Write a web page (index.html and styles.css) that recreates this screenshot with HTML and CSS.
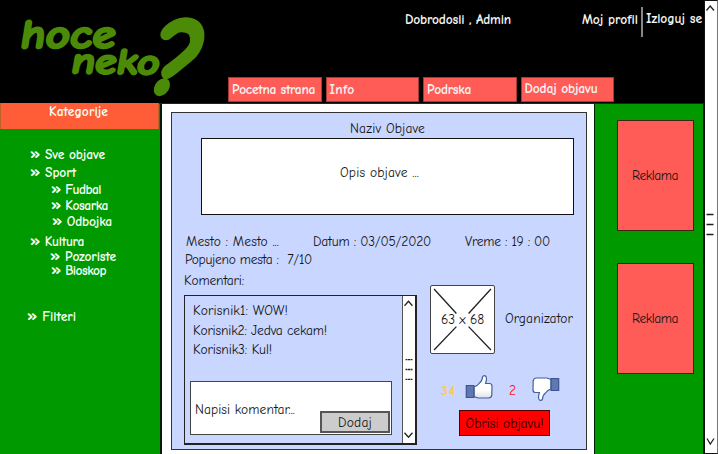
FILE: index.html
```html
<!DOCTYPE html>
<html lang="sr">
<head>
<meta charset="utf-8">
<title>Hoce neko?</title>
<link rel="stylesheet" href="styles.css">
</head>
<body>
<div class="window">
  <div class="page">
    <header class="header">
      <svg class="logo" viewBox="0 0 228 103" aria-label="hoce neko?">
        <g class="logo-text">
          <text transform="translate(19 48) skewX(-9)" font-size="41" stroke-width="2.2" textLength="95" lengthAdjust="spacingAndGlyphs">hoce</text>
          <text transform="translate(70 73) rotate(1) skewX(-9)" font-size="37" stroke-width="2.2" textLength="88" lengthAdjust="spacingAndGlyphs">neko</text>
          <text transform="translate(147 92.500) skewX(-13)" font-size="107" stroke-width="5" textLength="49" lengthAdjust="spacingAndGlyphs">?</text>
        </g>
      </svg>
      <div class="header-main">
        <div class="account">
          <span class="welcome" data-w="106">Dobrodosli , Admin</span>
          <a class="profile" data-w="56">Moj profil</a>
          <a class="logout" data-w="56">Izloguj se</a>
        </div>
        <nav class="tabs">
          <a class="tab"><span data-w="83">Pocetna strana</span></a>
          <a class="tab"><span data-w="25">Info</span></a>
          <a class="tab"><span data-w="44">Podrska</span></a>
          <a class="tab last"><span data-w="73">Dodaj objavu</span></a>
        </nav>
      </div>
    </header>
    <div class="columns">
      <aside class="sidebar">
        <h2 class="side-title"><span data-w="59">Kategorije</span></h2>
        <ul class="menu">
          <li class="all"><span data-w="75"><b>»</b> Sve objave</span></li>
          <li class="sport"><span data-w="46"><b>»</b> Sport</span>
            <ul class="sub">
              <li><span data-w="50"><b>»</b> Fudbal</span></li>
              <li><span data-w="57"><b>»</b> Kosarka</span></li>
              <li class="shifted"><span data-w="60"><b>»</b> Odbojka</span></li>
            </ul>
          </li>
          <li class="culture"><span data-w="54"><b>»</b> Kultura</span>
            <ul class="sub tight">
              <li><span data-w="66"><b>»</b> Pozoriste</span></li>
              <li class="shifted"><span data-w="55"><b>»</b> Bioskop</span></li>
            </ul>
          </li>
          <li class="filters"><span data-w="49"><b>»</b> Filteri</span></li>
        </ul>
      </aside>
      <main class="main">
        <article class="post">
          <h1 class="post-title"><span data-w="75">Naziv Objave</span></h1>
          <div class="description"><span data-w="79">Opis objave ...</span></div>
          <div class="facts">
            <span data-w="93">Mesto : Mesto ...</span>
            <span class="date" data-w="118">Datum : 03/05/2020</span>
            <span class="time" data-w="85">Vreme : 19 : 00</span>
          </div>
          <div class="places"><span data-w="127">Popujeno mesta :&nbsp; 7/10</span></div>
          <div class="lower">
            <section class="comments-col">
              <h3 class="comments-title"><span data-w="60">Komentari:</span></h3>
              <div class="comments">
                <div class="comments-body">
                  <p><span data-w="95">Korisnik1: WOW!</span></p>
                  <p><span data-w="134">Korisnik2: Jedva cekam!</span></p>
                  <p><span data-w="79">Korisnik3: Kul!</span></p>
                  <div class="composer">
                    <span class="hint" data-w="100">Napisi komentar...</span>
                    <button class="add"><span data-w="34">Dodaj</span></button>
                  </div>
                </div>
                <svg class="inner-scroll" viewBox="0 0 12 147">
                  <path d="M1.5 9.5 5.5 5l4 4.500M1.500 137l4 4.500 4-4.500"/>
                  <path class="grip" d="M2.500 63.500h7M2.500 73.500h7M2.500 83.500h7"/>
                </svg>
              </div>
            </section>
            <section class="side-info">
              <div class="organizer">
                <div class="photo">
                  <svg viewBox="0 0 62 66"><path d="M3 3 25 27M37 27 59 3M3 63 25 40M37 40 59 63"/></svg>
                  <span class="photo-size" data-w="43">63 x 68</span>
                </div>
                <span class="organizer-name" data-w="68">Organizator</span>
              </div>
              <div class="votes">
                <span class="up" data-w="15">34</span>
                <svg class="thumb thumb-up" viewBox="0 0 28 26">
                  <defs><linearGradient id="hand" x1="0" y1="0" x2="0" y2="1"><stop offset=".65" stop-color="#fff"/><stop offset="1" stop-color="#dedfe6"/></linearGradient></defs>
                  <path d="M9 13Q12.500 12 14.500 9Q17.300 7 17.500 3Q18 1.400 20 1.600Q21.800 2.500 21.500 5.500L20.600 9.500H25Q27.200 10 27 12.500L26.800 21Q26.500 24 23.500 24H13L9 22.500Z" fill="url(#hand)" stroke="#465f9c" stroke-width="1.200"/>
                  <path d="M1.300 11.500H8.900V23.500H1.300Z" fill="#6078b0" stroke="#3b5491" stroke-width="1.200"/>
                </svg>
                <span class="down" data-w="7">2</span>
                <svg class="thumb thumb-down" viewBox="0 0 28 26">
                  <g transform="rotate(180 14 13)">
                    <path d="M9 13Q12.500 12 14.500 9Q17.300 7 17.500 3Q18 1.400 20 1.600Q21.800 2.500 21.500 5.500L20.600 9.500H25Q27.200 10 27 12.500L26.800 21Q26.500 24 23.500 24H13L9 22.500Z" fill="#fff" stroke="#465f9c" stroke-width="1.200"/>
                    <path d="M1.300 11.500H8.900V23.500H1.300Z" fill="#6078b0" stroke="#3b5491" stroke-width="1.200"/>
                  </g>
                </svg>
              </div>
              <button class="delete"><span data-w="78">Obrisi objavu!</span></button>
            </section>
          </div>
        </article>
      </main>
      <aside class="ads">
        <div class="ad"><span data-w="46">Reklama</span></div>
        <div class="ad"><span data-w="46">Reklama</span></div>
      </aside>
    </div>
  </div>
  <div class="scrollbar">
    <svg viewBox="0 0 14 454"><path d="M1.500 9.500 5.200 5 9 9.500M2 437.500 5.300 443 9 437.500M1.500 213.500h7M1.500 223.500h7M1.500 233.500h7"/></svg>
  </div>
</div>
<script src="fit.js"></script>
</body>
</html>
```
FILE: styles.css
```css
* { box-sizing: border-box; margin: 0; padding: 0; }

body {
  width: 718px;
  height: 454px;
  overflow: hidden;
  background: #000;
  color: #141414;
  font: 13.500px/16px "Comic Neue", "Comic Sans MS", "Open Sans", sans-serif;
  font-variant-ligatures: none;
}

h1, h2, h3, button { font: inherit; color: inherit; }
ul { list-style: none; }
span, a { white-space: nowrap; }
[data-w] { display: inline-block; vertical-align: top; padding-top: 1px; margin-bottom: -1px; }
svg { display: block; }

.window { display: flex; height: 454px; }
.page { width: 704px; display: flex; flex-direction: column; }

/* header */
.header { display: flex; height: 103px; background: #000; color: #f4f4f4; font-weight: 700; }
.logo { width: 228px; height: 103px; flex: none; overflow: visible; }
.logo-text {
  font-weight: 700;
  fill: #4c8b08;
  stroke: #4c8b08;
  stroke-linejoin: round;
}
.header-main { flex: 1; display: flex; flex-direction: column; justify-content: space-between; }
.account { display: flex; padding-top: 7px; }
.welcome { margin: 4px 71px 0 177px; }
.profile { margin-top: 4px; }
.logout { height: 30px; margin-left: 3px; padding: 4px 0 0 3px; border-left: 2px solid #888; }
.tabs { display: flex; gap: 4px; padding-bottom: 1px; }
.tab {
  width: 93.500px;
  height: 25px;
  padding: 3px 0 0 3px;
  border: 1px solid #a33a38;
  background: #ff5c58;
}
.tab.last { padding-top: 2px; }

/* category menu */
.columns { display: flex; flex: 1; border-top: 1px solid #222; }
.sidebar { width: 162px; background: #090; border-right: 2px solid #031903; color: #f4fff4; font-weight: 700; }
.side-title { width: 159px; height: 26px; padding: 0 0 0 48px; margin-top: -1px; background: #ff5c38; border: solid #c0612a; border-width: 0 1px; font-weight: 700; }
.menu { padding: 17px 0 0 30px; }
.menu b { font-size: 18px; line-height: 0; }
.sport { margin-top: 2px; }
.sub { padding-left: 21px; }
.sub li { height: 16px; }
.sub li:first-child { margin-top: 1px; }
.sub .shifted { padding-left: 1px; }
.culture { margin-top: 4px; }
.sub.tight { padding-left: 20px; }
.sub.tight li { height: 14px; }
.sub.tight li:first-child { margin-top: -1px; }
.filters { margin: 32px 0 0 -3px; }

/* post */
.main { width: 432px; padding: 8px 7px 0 9px; background: #fff; }
.post { height: 338px; padding-left: 12px; background: #c9d6ff; border: 1px solid #333; }
.post-title { padding: 7px 0 0 166px; }
.description {
  width: 373px;
  height: 77px;
  margin: 2px 0 0 17px;
  padding: 25px 0 0 138px;
  background: #fff;
  border: 1px solid #111;
}
.facts { display: flex; padding: 18px 0 0 2px; }
.date { margin-left: 34px; }
.time { margin-left: 34px; }
.places { padding: 2px 0 0 1px; }
.lower { display: flex; }
.comments-col { width: 233px; }
.comments-title { padding-top: 5px; }
.comments { display: flex; height: 150px; margin-top: 7px; border: 1px solid #222; border-right-width: 2px; border-bottom-width: 2px; }
.comments-body { width: 218px; padding: 6px 0 0 5px; }
.comments-body p { height: 19.500px; padding-left: 3px; }
.composer {
  display: flex;
  align-items: flex-end;
  justify-content: space-between;
  width: 202px;
  height: 54px;
  margin-top: 20px;
  padding: 0 1px 1px 4px;
  background: #fff;
  border: 1px solid #444;
}
.hint { padding-bottom: 16px; }
.add { width: 70px; height: 22px; background: #ccc; border: 2px solid #555; line-height: 16px; }
.inner-scroll { width: 13px; height: 147px; background: #fff; border-left: 1px solid #555; }
.inner-scroll path, .photo path, .scrollbar path { fill: none; stroke: #222; stroke-width: 1.300; }
.inner-scroll .grip { stroke-dasharray: 2 .500; }

/* organizer and votes */
.side-info { padding: 18px 0 0 13px; }
.organizer { display: flex; gap: 10px; }
.photo { position: relative; width: 65px; height: 69px; border: 1.500px solid #444; border-radius: 2px; background: #fff; }
.photo-size { position: absolute; left: 10px; top: 25px; }
.organizer-name { margin-top: 25px; }
.votes { display: flex; height: 56px; padding: 20px 0 0 11px; }
.up { margin-top: 8px; color: #ffc94a; font-weight: 700; }
.thumb { width: 28px; height: 26px; }
.thumb-up { margin-left: 9px; }
.down { margin: 8px 0 0 16px; color: #f11; }
.thumb-down { margin: 2px 0 0 16px; }
.delete { width: 91px; height: 26px; margin-left: 29px; border: 1.500px solid #500; background: #f00; color: #200; }

/* advertisements */
.ads { flex: 1; padding: 16px 0 0 22px; background: #090; border: solid #020; border-width: 0 1px; }
.ad { width: 77px; height: 111px; margin-bottom: 32px; padding: 46px 0 0 14px; background: #ff5c58; border: 1px solid #421; }

/* page scrollbar */
.scrollbar { width: 14px; background: #fff; border: 1px solid #111; border-right-color: #777; }
.scrollbar svg { width: 14px; height: 454px; }
```
FILE: fit.js
```js
document.querySelectorAll('[data-w]').forEach(function (el) {
  var range = document.createRange();
  range.selectNodeContents(el);
  var natural = range.getBoundingClientRect().width;
  var gap = (Number(el.dataset.w) - natural) / el.textContent.length;
  el.style.letterSpacing = gap.toFixed(3) + 'px';
});
```
